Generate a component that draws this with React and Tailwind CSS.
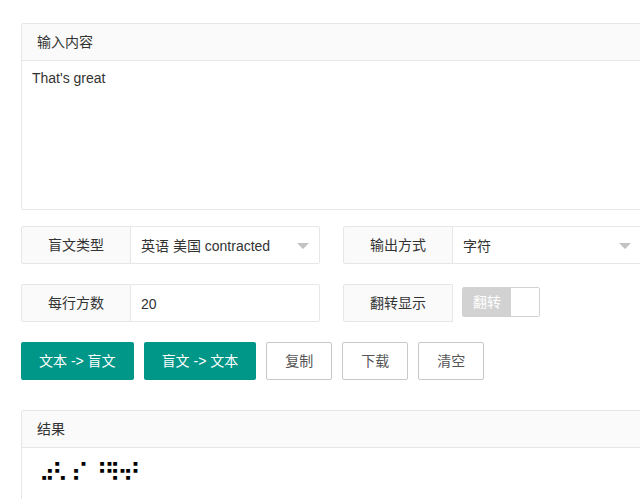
import { useState } from "react";

const FONT = {
  fontFamily: '"Liberation Sans", Arial, "Noto Sans CJK SC", sans-serif',
};

function Caret() {
  return (
    <span className="ml-auto block w-0 h-0 border-l-[6px] border-r-[6px] border-t-[6px] border-l-transparent border-r-transparent border-t-[#c2c2c2]" />
  );
}

function Field({ label, children, bare }) {
  return (
    <div className="flex h-[38px] shrink-0">
      <div className="w-[110px] flex items-center justify-center border border-[#e6e6e6] bg-[#fafafa] rounded-l-[2px] text-[#333]">
        {label}
      </div>
      {bare ? (
        <div className="w-[189px]">{children}</div>
      ) : (
        <div className="w-[189px] flex items-center px-[10px] pt-[2px] border border-l-0 border-[#e6e6e6] rounded-r-[2px] text-[#333]">
          {children}
        </div>
      )}
    </div>
  );
}

export default function App() {
  const [text] = useState("That's great");
  // contracted: ⠠ capital, ⠞ "that", ⠄ apostrophe, ⠎ s, then "grt" short form
  const [braille] = useState("⠠⠞⠄⠎⠀⠛⠗⠞");

  return (
    <div className="w-screen h-[499px] overflow-hidden bg-white text-[14px] text-[#333]" style={FONT}>
      <div className="w-[1000px] pl-[21px] pt-[23px]">
        {/* input panel */}
        <div className="border border-[#e6e6e6] rounded-[2px]">
          <div className="h-[37px] flex items-center px-[15px] bg-[#fafafa] border-b border-[#e6e6e6]">
            输入内容
          </div>
          <div className="h-[148px] px-[10px] pt-[7px] leading-[20px]">{text}</div>
        </div>

        {/* options */}
        <div className="mt-[16px] flex gap-[23px]">
          <Field label="盲文类型">
            <span>英语 美国 contracted</span>
            <Caret />
          </Field>
          <Field label="输出方式">
            <span>字符</span>
            <Caret />
          </Field>
        </div>

        <div className="mt-[20px] flex gap-[23px]">
          <Field label="每行方数">
            <span>20</span>
          </Field>
          <Field label="翻转显示" bare>
            <div className="ml-[9px] mt-[3px] flex h-[30px] w-[78px] border border-[#d2d2d2] rounded-[2px] overflow-hidden">
              <div className="w-[48px] bg-[#d2d2d2] text-white text-[14px] flex items-center pl-[10px]">翻转</div>
              <div className="flex-1 bg-white" />
            </div>
          </Field>
        </div>

        {/* actions */}
        <div className="mt-[20px] flex gap-[10px]">
          <button className="h-[38px] px-[18px] bg-[#009688] text-white rounded-[2px]">文本 -&gt; 盲文</button>
          <button className="h-[38px] px-[18px] bg-[#009688] text-white rounded-[2px]">盲文 -&gt; 文本</button>
          <button className="h-[38px] px-[18px] border border-[#c9c9c9] text-[#555] bg-white rounded-[2px]">复制</button>
          <button className="h-[38px] px-[18px] border border-[#c9c9c9] text-[#555] bg-white rounded-[2px]">下载</button>
          <button className="h-[38px] px-[18px] border border-[#c9c9c9] text-[#555] bg-white rounded-[2px]">清空</button>
        </div>

        {/* result panel */}
        <div className="mt-[30px] border border-[#e6e6e6] rounded-[2px]">
          <div className="h-[37px] flex items-center px-[15px] bg-[#fafafa] border-b border-[#e6e6e6]">
            结果
          </div>
          <div
            className="h-[148px] pl-[9px] pt-[8px] leading-[34px] text-[26px] tracking-[-6px] text-black"
            style={{ fontFamily: '"DejaVu Sans", sans-serif' }}
          >
            {braille}
          </div>
        </div>
      </div>
    </div>
  );
}
